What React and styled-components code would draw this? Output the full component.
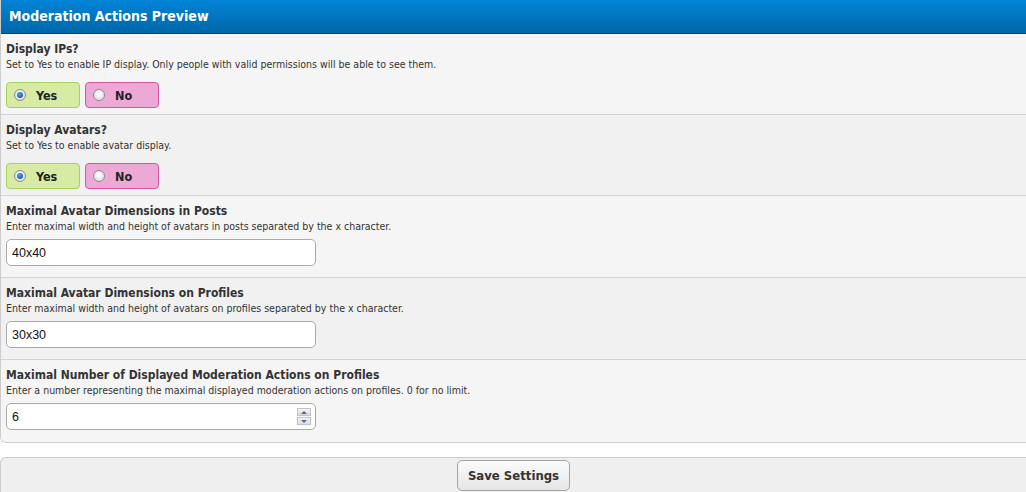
import React from "react";
import styled, { createGlobalStyle } from "styled-components";

const GlobalStyle = createGlobalStyle`
  html, body {
    margin: 0;
    padding: 0;
    background: #fff;
  }
  body {
    font-family: "DejaVu Sans Condensed", "DejaVu Sans", "Liberation Sans", sans-serif;
    font-size: 11px;
    color: #333;
  }
`;

const Page = styled.div`
  width: 1026px;
  height: 492px;
  overflow: hidden;
`;

const Panel = styled.div`
  border-left: 1px solid #ccc;
  border-bottom: 1px solid #ccc;
  border-bottom-left-radius: 6px;
  overflow: hidden;
`;

const Header = styled.div`
  height: 34px;
  box-sizing: border-box;
  padding: 8px 8px 0;
  background: linear-gradient(to bottom, #0285d8, #0066a8);
  border-bottom: 1px solid #1a3a4a;
  color: #fff;
  font-weight: bold;
  font-size: 14px;
`;

const Row = styled.div`
  height: ${props => (props.tall ? 82 : 81)}px;
  box-sizing: border-box;
  padding: 7px 5px 0;
  background: ${props => (props.alt ? "#f1f1f1" : "#f5f5f5")};
  border-bottom: ${props => (props.last ? "none" : "1px solid #d4d4d4")};
  display: flex;
  flex-direction: column;
`;

const Title = styled.div`
  font-weight: bold;
  font-size: 12px;
  line-height: 16px;
  color: #333;
`;

const Desc = styled.div`
  font-size: 10.5px;
  line-height: 15px;
  color: #333;
  margin-bottom: ${props => (props.wide ? 10 : 5)}px;
`;

const Choices = styled.div`
  display: flex;
  gap: 5px;
`;

const Choice = styled.label`
  width: 74px;
  height: 26px;
  box-sizing: border-box;
  display: flex;
  align-items: center;
  gap: 10px;
  padding-left: 7px;
  border-radius: 4px;
  border: 1px solid ${props => (props.yes ? "#a5d15d" : "#d6569e")};
  background: ${props => (props.yes ? "#d8eba4" : "#eda9d6")};
  font-weight: bold;
  font-size: 12.5px;
  color: #222;
`;

const Radio = styled.span`
  width: 12px;
  height: 12px;
  border-radius: 50%;
  box-sizing: border-box;
  border: 1px solid #8b8b8b;
  background: radial-gradient(circle at 50% 40%, #fff, #d6d6d6);
  display: flex;
  align-items: center;
  justify-content: center;
  &::after {
    content: "";
    width: 6px;
    height: 6px;
    border-radius: 50%;
    background: ${props =>
      props.checked ? "radial-gradient(circle at 40% 35%, #4fa6ec, #0a3f80)" : "transparent"};
  }
`;

const Field = styled.div`
  width: 310px;
  height: 27px;
  box-sizing: border-box;
  border: 1px solid #aaa;
  border-radius: 5px;
  background: #fff;
  display: flex;
  align-items: center;
  justify-content: space-between;
  padding: 0 4px 0 5px;
  font-family: "Liberation Sans", Arial, sans-serif;
  font-size: 12.5px;
  color: #111;
`;

const Spinner = styled.div`
  width: 14px;
  height: 17px;
  display: flex;
  flex-direction: column;
  gap: 1px;
`;

const SpinBtn = styled.div`
  flex: 1;
  background: linear-gradient(to bottom, #f4f4f4, #dcdcdc);
  border: 1px solid #c4c4c4;
  display: flex;
  align-items: center;
  justify-content: center;
  &::after {
    content: "";
    border-left: 3px solid transparent;
    border-right: 3px solid transparent;
    ${props =>
      props.up ? "border-bottom: 3px solid #4a6aa8;" : "border-top: 3px solid #4a6aa8;"}
  }
`;

const Gap = styled.div`
  height: 14px;
`;

const Buttons = styled.div`
  height: 40px;
  background: #efefef;
  border-top: 1px solid #ccc;
  border-left: 1px solid #ccc;
  border-top-left-radius: 6px;
  display: flex;
  justify-content: center;
  padding-top: 2px;
  box-sizing: border-box;
`;

const SaveButton = styled.button`
  width: 113px;
  height: 31px;
  border: 1px solid #a4a4a4;
  border-radius: 5px;
  background: linear-gradient(to bottom, #fbfbfb, #e6e6e6);
  font-family: "DejaVu Sans Condensed", "DejaVu Sans", sans-serif;
  font-weight: bold;
  font-size: 13px;
  color: #333;
  padding: 0;
`;

const YesNo = ({ value }) => (
  <Choices>
    <Choice yes>
      <Radio checked={value} />
      Yes
    </Choice>
    <Choice>
      <Radio checked={!value} />
      No
    </Choice>
  </Choices>
);

const settings = [
  {
    title: "Display IPs?",
    desc: "Set to Yes to enable IP display. Only people with valid permissions will be able to see them.",
    type: "yesno",
    value: true
  },
  {
    title: "Display Avatars?",
    desc: "Set to Yes to enable avatar display.",
    type: "yesno",
    value: true
  },
  {
    title: "Maximal Avatar Dimensions in Posts",
    desc: "Enter maximal width and height of avatars in posts separated by the x character.",
    type: "text",
    value: "40x40"
  },
  {
    title: "Maximal Avatar Dimensions on Profiles",
    desc: "Enter maximal width and height of avatars on profiles separated by the x character.",
    type: "text",
    value: "30x30"
  },
  {
    title: "Maximal Number of Displayed Moderation Actions on Profiles",
    desc: "Enter a number representing the maximal displayed moderation actions on profiles. 0 for no limit.",
    type: "number",
    value: "6"
  }
];

export default function App() {
  return (
    <Page>
      <GlobalStyle />
      <Panel>
        <Header>Moderation Actions Preview</Header>
        {settings.map((s, i) => (
          <Row
            key={s.title}
            alt={i % 2 === 1}
            tall={i > 1}
            last={i === settings.length - 1}
          >
            <Title>{s.title}</Title>
            <Desc wide={s.type === "yesno"}>{s.desc}</Desc>
            {s.type === "yesno" ? (
              <YesNo value={s.value} />
            ) : (
              <Field>
                <span>{s.value}</span>
                {s.type === "number" && (
                  <Spinner>
                    <SpinBtn up />
                    <SpinBtn />
                  </Spinner>
                )}
              </Field>
            )}
          </Row>
        ))}
      </Panel>
      <Gap />
      <Buttons>
        <SaveButton>Save Settings</SaveButton>
      </Buttons>
    </Page>
  );
}
